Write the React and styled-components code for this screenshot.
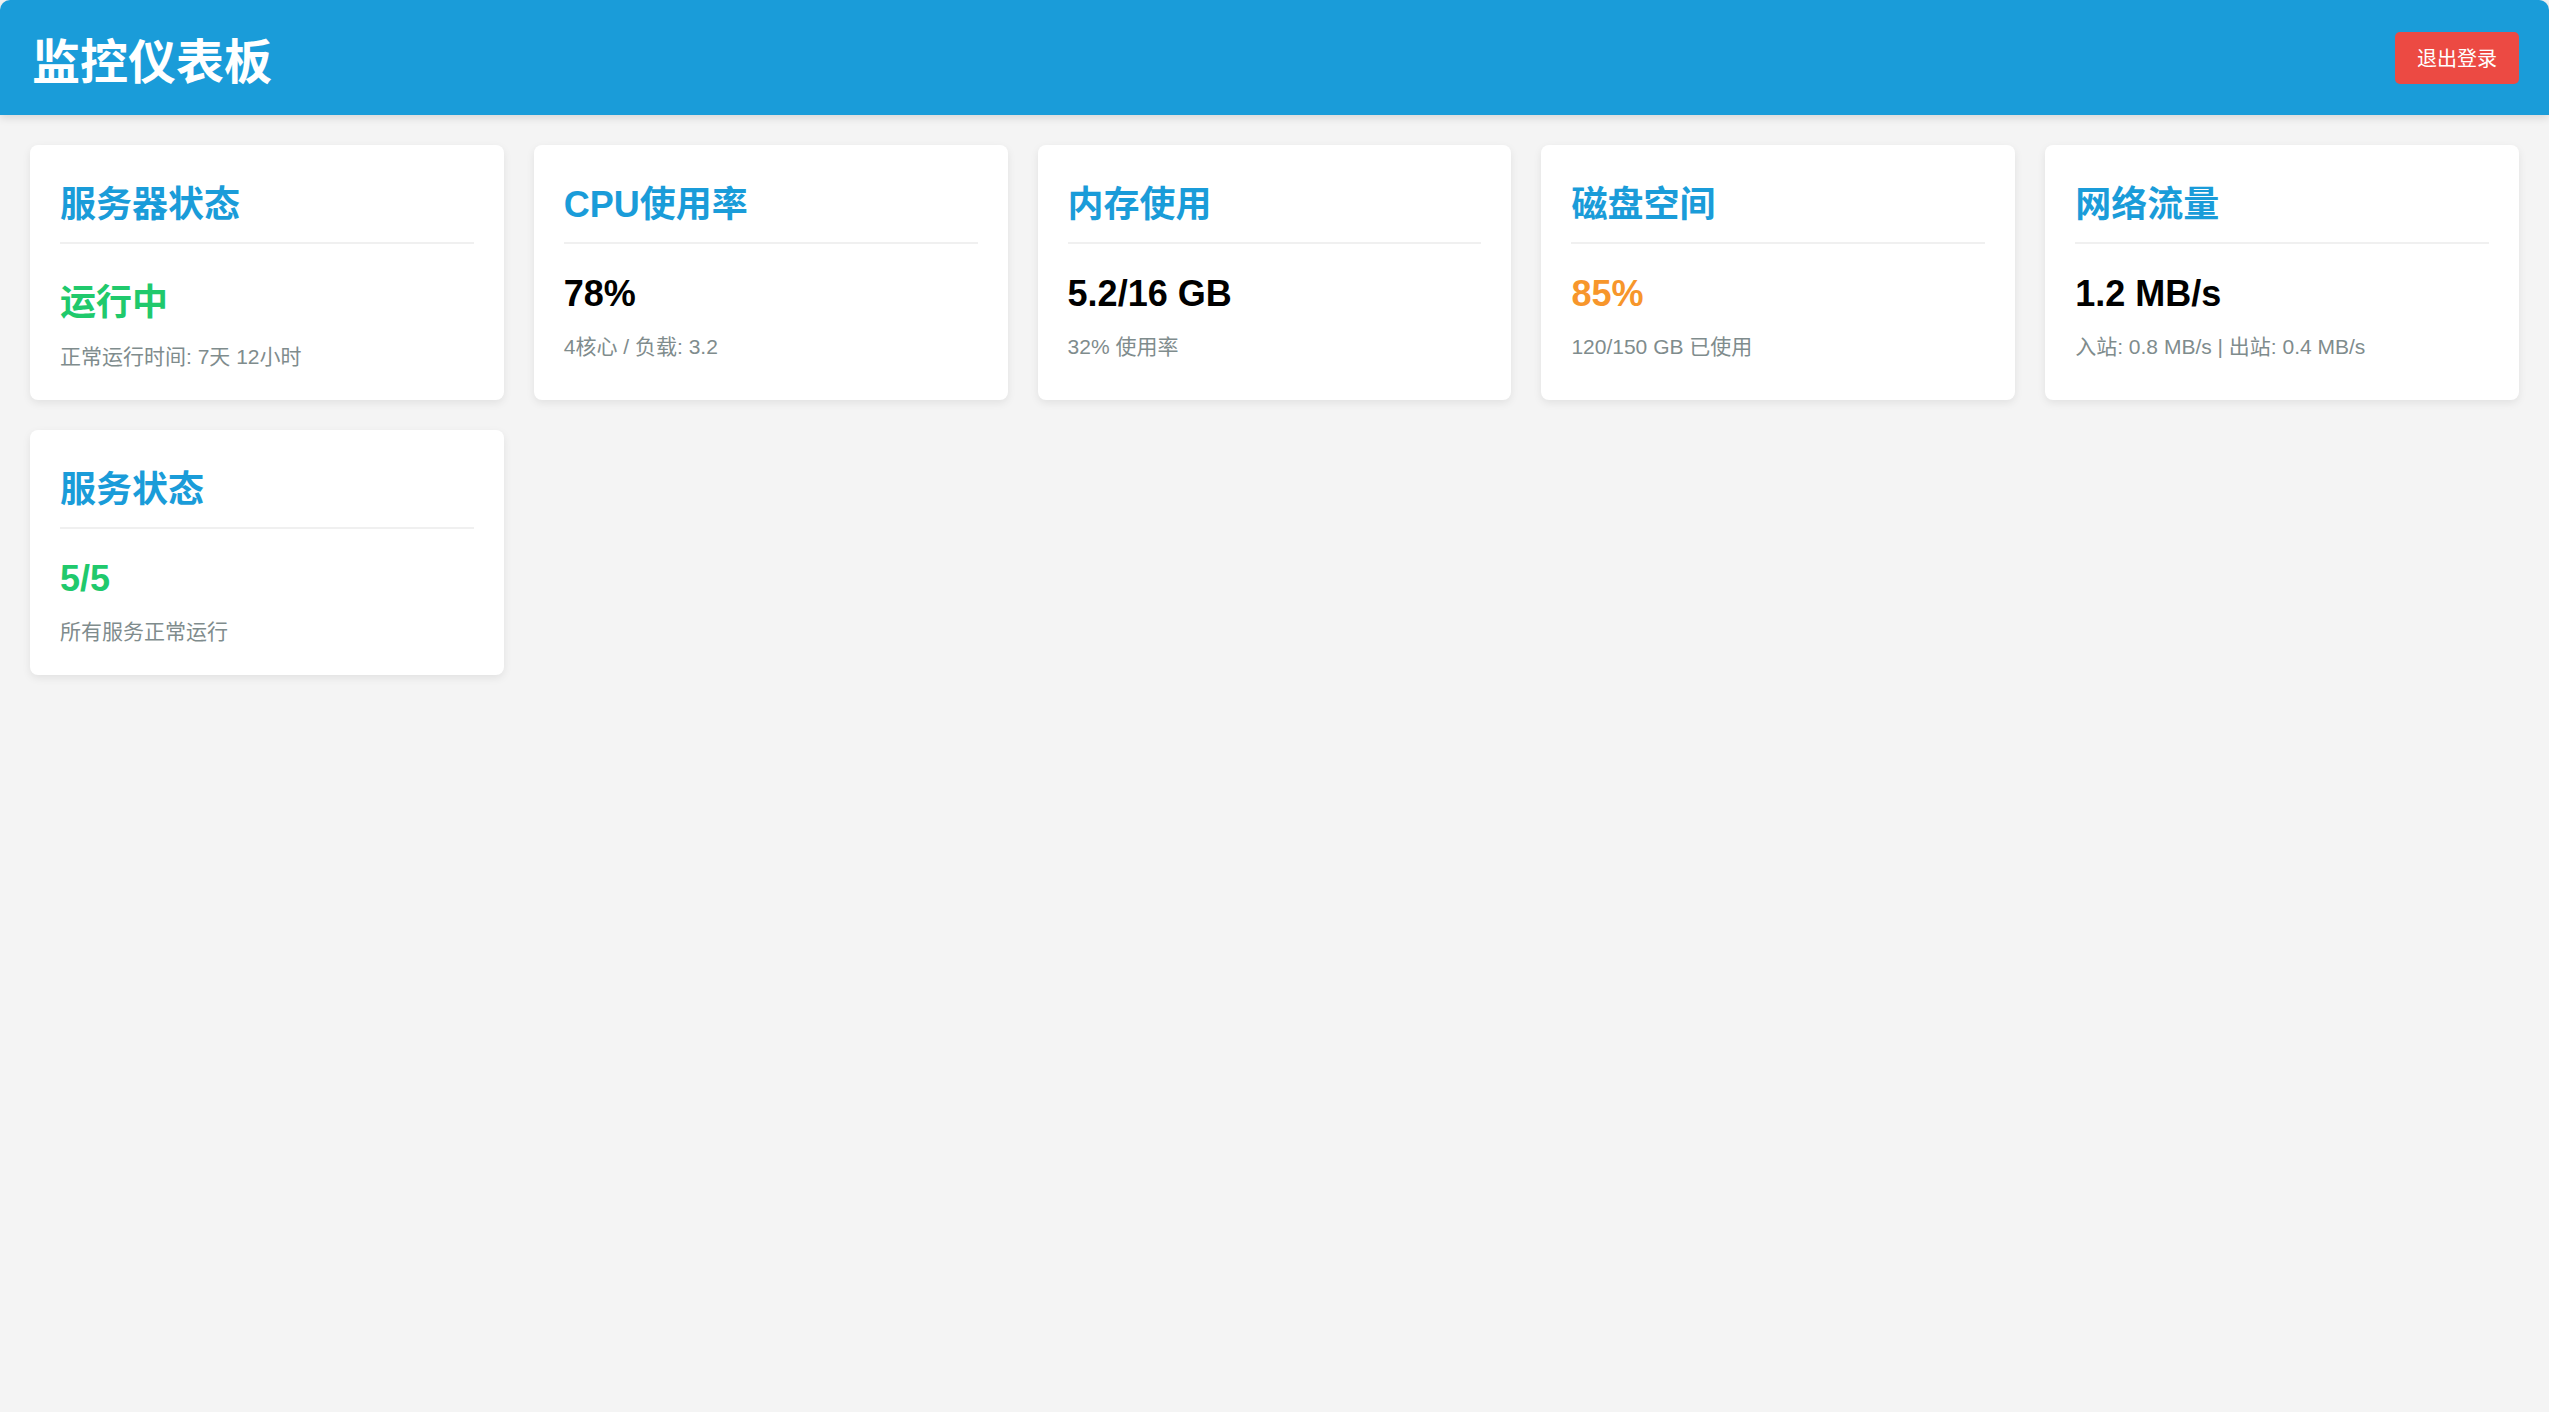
import React from 'react'
import styled, { createGlobalStyle } from 'styled-components'

const GlobalStyle = createGlobalStyle`
    html, body {
        margin: 0;
        padding: 0;
        background-color: #f4f4f4;
        font-family: "Liberation Sans", Arial, "Noto Sans CJK SC", sans-serif;
    }
`;

const Page = styled.div`
    min-height: 1412px;
    background-color: #f4f4f4;
`;

const Header = styled.header`
    display: flex;
    align-items: center;
    justify-content: space-between;
    height: 115px;
    padding: 0 30px 0 32px;
    box-sizing: border-box;
    background-color: #1a9cd9;
    border-radius: 10px 10px 0 0;
    box-shadow: 0 3px 9px rgba(0, 0, 0, 0.12);
`;

const Title = styled.h1`
    margin: 0;
    font-size: 48px;
    font-weight: bold;
    color: white;
`;

const LogoutButton = styled.button`
    background-color: #ec4a43;
    color: white;
    border: none;
    border-radius: 5px;
    font-family: inherit;
    font-size: 20px;
    padding: 0 22px;
    height: 52px;
    cursor: pointer;
`;

const Grid = styled.main`
    display: grid;
    grid-template-columns: repeat(5, 1fr);
    gap: 30px;
    padding: 30px;
`;

const Card = styled.section`
    background-color: white;
    border-radius: 8px;
    padding: 30px;
    box-shadow: 0 3px 9px rgba(0, 0, 0, 0.08);
`;

const CardTitle = styled.h3`
    margin: 0;
    padding: 0 0 15px;
    font-size: 36px;
    font-weight: bold;
    color: #1a9cd9;
    border-bottom: 2px solid #f0f0f0;
`;

const Value = styled.div`
    margin: 29px 0 15px;
    font-size: 36px;
    font-weight: bold;
    color: ${p => p.$color || '#000'};
`;

const Detail = styled.div`
    font-size: 21px;
    color: #7f8c8d;
`;

const cards = [
    { title: '服务器状态', value: '运行中', color: '#20c96c', detail: '正常运行时间: 7天 12小时' },
    { title: 'CPU使用率', value: '78%', detail: '4核心 / 负载: 3.2' },
    { title: '内存使用', value: '5.2/16 GB', detail: '32% 使用率' },
    { title: '磁盘空间', value: '85%', color: '#f7962b', detail: '120/150 GB 已使用' },
    { title: '网络流量', value: '1.2 MB/s', detail: '入站: 0.8 MB/s | 出站: 0.4 MB/s' },
    { title: '服务状态', value: '5/5', color: '#20c96c', detail: '所有服务正常运行' },
];

const App = () => {
  return (
    <Page>
        <GlobalStyle />
        <Header>
            <Title>监控仪表板</Title>
            <LogoutButton>退出登录</LogoutButton>
        </Header>
        <Grid>
            {cards.map(c => (
                <Card key={c.title}>
                    <CardTitle>{c.title}</CardTitle>
                    <Value $color={c.color}>{c.value}</Value>
                    <Detail>{c.detail}</Detail>
                </Card>
            ))}
        </Grid>
    </Page>
  )
}

export default App
